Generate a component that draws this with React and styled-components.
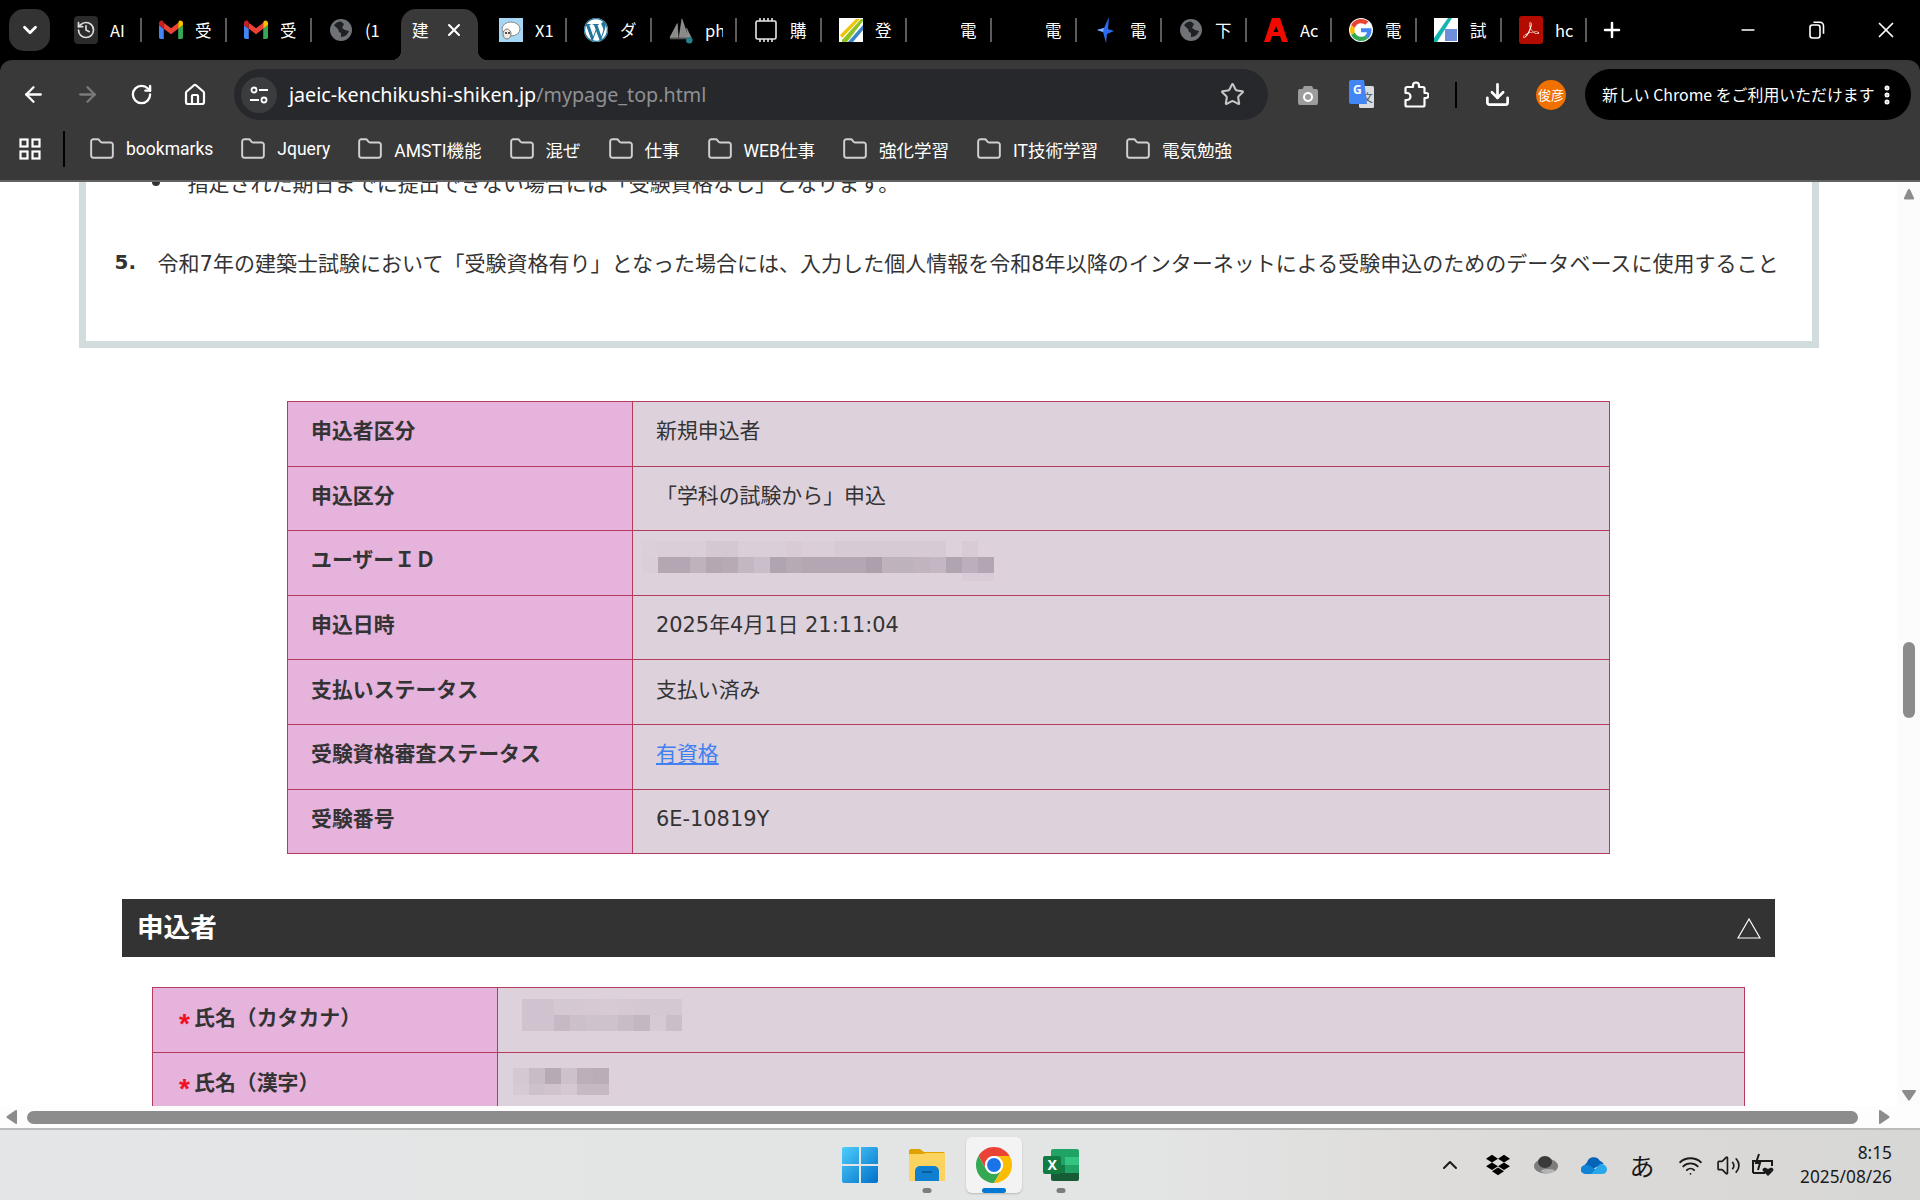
import React from 'react'
import styled, { createGlobalStyle } from 'styled-components'
import {
  ArrowLeft, ArrowRight, RotateCw, Home, Star, Download, MoreVertical,
  ChevronDown, ChevronUp, Folder, Plus, Minus, X, Wifi, Volume2, History,
} from 'lucide-react'
import { SiWordpress, SiDropbox, SiAdobeacrobatreader } from 'react-icons/si'

const JP = '"Noto Sans CJK JP", "Noto Sans", sans-serif'
const UI = '"Noto Sans", "Noto Sans CJK JP", sans-serif'
const PAGE_FONT = '"DejaVu Sans", "Noto Sans CJK JP", sans-serif'

const Global = createGlobalStyle`
  html, body { margin: 0; padding: 0; background: #000; }
  * { box-sizing: border-box; }
`

const Screen = styled.div`
  width: 1920px;
  height: 1200px;
  display: flex;
  flex-direction: column;
  overflow: hidden;
  font-family: ${JP};
`

/* ---- tab strip ---- */
const TabStrip = styled.div`
  height: 60px;
  flex: none;
  display: flex;
  align-items: flex-start;
  padding: 9px 0 0 9px;
  background: #000;
`
const ExpandButton = styled.div`
  width: 41px;
  height: 42px;
  margin-right: 7px;
  border-radius: 15px;
  background: #333;
  color: #fff;
  display: flex;
  align-items: center;
  justify-content: center;
`
const Tab = styled.div`
  position: relative;
  flex: none;
  width: ${p => (p.$active ? '77px' : '85px')};
  height: ${p => (p.$active ? '51px' : '42px')};
  margin: ${p => (p.$active ? '0 4px' : '0')};
  padding: ${p => (p.$active ? '0 0 9px 11px' : '0 0 0 17px')};
  display: flex;
  align-items: center;
  gap: 12px;
  color: #fff;
  background: ${p => (p.$active ? '#393939' : 'transparent')};
  border-radius: ${p => (p.$active ? '15px 15px 0 0' : '0')};
  ${p => p.$sep && `
    &::after {
      content: '';
      position: absolute;
      right: 0;
      top: 9px;
      width: 2px;
      height: 24px;
      background: #5c5c5c;
    }
  `}
  ${p => p.$active && `
    &::before {
      content: '';
      position: absolute;
      left: -10px;
      bottom: 0;
      width: 10px;
      height: 10px;
      background: radial-gradient(circle at 0 0, transparent 10px, #393939 10.5px);
    }
    & > i {
      position: absolute;
      right: -10px;
      bottom: 0;
      width: 10px;
      height: 10px;
      background: radial-gradient(circle at 100% 0, transparent 10px, #393939 10.5px);
    }
  `}
`
const FavSlot = styled.div`
  flex: none;
  width: 24px;
  height: 24px;
  display: flex;
  align-items: center;
  justify-content: center;
`
const TabTitle = styled.span`
  width: 18px;
  overflow: hidden;
  white-space: nowrap;
  font-size: 16.5px;
  line-height: 24px;
  flex: none;
`
const TabClose = styled.div`
  display: flex;
  margin-left: 2px;
`
const NewTab = styled.div`
  width: 40px;
  height: 42px;
  margin-left: 5px;
  color: #fff;
  display: flex;
  align-items: center;
  justify-content: center;
`
const WindowControls = styled.div`
  margin: -9px 0 0 auto;
  display: flex;
`
const WindowButton = styled.div`
  width: 69px;
  height: 60px;
  color: #fff;
  display: flex;
  align-items: center;
  justify-content: center;
`

/* ---- toolbar ---- */
const Toolbar = styled.div`
  height: 60px;
  flex: none;
  display: flex;
  align-items: center;
  padding: 9px 9px 0 6px;
  background: #393939;
  border-radius: 12px 12px 0 0;
`
const ToolButton = styled.div`
  width: 54px;
  height: 51px;
  flex: none;
  display: flex;
  align-items: center;
  justify-content: center;
  color: ${p => p.$color || '#fff'};
`
const AddressBar = styled.div`
  width: 1034px;
  height: 51px;
  margin: 0 13px 0 12px;
  flex: none;
  padding: 0 23px 0 7px;
  border-radius: 26px;
  background: #27282b;
  display: flex;
  align-items: center;
`
const SiteChip = styled.div`
  width: 36px;
  height: 36px;
  border-radius: 50%;
  background: #3b3c3e;
  color: #fff;
  display: flex;
  align-items: center;
  justify-content: center;
`
const Url = styled.div`
  margin-left: 12px;
  font-family: ${UI};
  font-size: 19.7px;
  color: #fff;
  white-space: nowrap;
  & span { color: #8f9194; }
`
const StarSlot = styled.div`
  margin-left: auto;
  color: #c4c7c5;
  display: flex;
`
const BarDivider = styled.div`
  width: 2px;
  flex: none;
  height: ${p => p.$h};
  margin: ${p => p.$m};
  background: #000;
`
const Avatar = styled.div`
  width: 30px;
  height: 30px;
  margin: 0 19px 0 12px;
  flex: none;
  border-radius: 50%;
  background: #f07000;
  color: #fff;
  font-size: 13px;
  display: flex;
  align-items: center;
  justify-content: center;
`
const UpdatePill = styled.div`
  flex: 1;
  height: 51px;
  border-radius: 26px;
  background: #000;
  color: #fff;
  display: flex;
  align-items: center;
  justify-content: space-between;
  padding: 0 12px 0 17px;
  font-size: 15.9px;
  white-space: nowrap;
`

/* ---- bookmarks ---- */
const BookmarksBar = styled.div`
  height: 62px;
  flex: none;
  display: flex;
  align-items: center;
  padding: 0 0 2px 19px;
  background: #393939;
  border-bottom: 2px solid #626262;
`
const Bookmark = styled.div`
  display: flex;
  align-items: center;
  gap: 11px;
  margin-right: 27px;
  color: #fff;
  font-family: Roboto, "Noto Sans CJK JP", sans-serif;
  font-size: 17.5px;
  white-space: nowrap;
  & svg { color: #d0d0d0; }
`

/* ---- page ---- */
const Viewport = styled.div`
  flex: none;
  height: 924px;
  display: flex;
  background: #fff;
  overflow: hidden;
`
const Page = styled.div`
  width: 1897px;
  flex: none;
  color: #333;
  font-family: ${PAGE_FONT};
  font-size: 21.03px;
`
const NoticeCard = styled.div`
  width: 1740px;
  margin: -32px auto 53px;
  border: 7px solid #d2dcdc;
  padding: 7px 0 60px;
`
const BulletRow = styled.div`
  height: 36px;
  margin-left: 66px;
  display: flex;
  align-items: center;
  gap: 28px;
  white-space: nowrap;
  &::before {
    content: '';
    width: 8px;
    height: 8px;
    border-radius: 50%;
    background: #333;
  }
`
const NumberedRow = styled.div`
  height: 36px;
  margin: 44px 0 1px 29px;
  display: flex;
  align-items: center;
  white-space: nowrap;
`
const RowNumber = styled.b`
  width: 43px;
  font-size: 20px;
`
const InfoTable = styled.table`
  width: ${p => p.$w}px;
  margin: 0 auto;
  border-collapse: collapse;
  table-layout: fixed;
  & th, & td {
    height: ${p => p.$rowH}px;
    border: 1px solid #b63a5c;
    padding: 0 0 4px 23px;
    text-align: left;
    vertical-align: middle;
    font-size: 20.9px;
    line-height: 1.3;
  }
  & th { width: ${p => p.$labelW}px; background: #e6b3dd; font-weight: 700; }
  & td { background: #ddd1dc; font-weight: 400; }
`
const FormLabel = styled.th`
  && { padding-left: 26px; }
`
const Required = styled.span`
  display: inline-block;
  width: 15px;
  color: #f01020;
  font-family: "Liberation Sans", sans-serif;
  font-size: 28px;
  font-weight: 700;
  line-height: 0;
  vertical-align: -8px;
`
const StatusLink = styled.a`
  color: #4080f0;
  text-decoration: underline;
`
const SectionBar = styled.div`
  width: 1653px;
  height: 58px;
  margin: 45px auto 30px;
  padding: 0 14px 6px 15px;
  background: #333;
  color: #fff;
  display: flex;
  align-items: center;
  justify-content: space-between;
  font-size: 26.6px;
  font-weight: 700;
  & svg { margin-top: 6px; }
`
const MosaicSvg = styled.svg`
  display: block;
  margin: ${p => p.$m};
`

/* ---- scrollbars ---- */
const VScroll = styled.div`
  width: 23px;
  flex: none;
  padding: 6px 0 5px;
  background: #fcfcfc;
  display: flex;
  flex-direction: column;
  align-items: center;
`
const VThumb = styled.div`
  width: 12px;
  height: 76px;
  margin-top: 442px;
  margin-bottom: auto;
  border-radius: 6px;
  background: #8c8c8c;
`
const HScroll = styled.div`
  height: 22px;
  flex: none;
  padding-left: 6px;
  background: #fdfdfd;
  display: flex;
  align-items: center;
`
const HThumb = styled.div`
  width: 1831px;
  height: 13px;
  margin: 0 21px 0 10px;
  border-radius: 7px;
  background: #8c8c8c;
`

/* ---- taskbar ---- */
const Taskbar = styled.div`
  height: 72px;
  flex: none;
  border-top: 2px solid #bcbcbc;
  background: linear-gradient(90deg, #e4e5e6 0%, #e3e4e4 60%, #dcdad8 80%, #d7d7d6 100%);
  display: grid;
  grid-template-columns: 1fr auto 1fr;
  align-items: center;
`
const AppGroup = styled.div`
  grid-column: 2;
  display: flex;
`
const App = styled.div`
  position: relative;
  width: 67px;
  height: 56px;
  display: flex;
  align-items: center;
  justify-content: center;
`
const ActiveTile = styled.div`
  width: 56px;
  height: 56px;
  border-radius: 6px;
  background: #f3f3f3;
  box-shadow: 0 1px 2px rgba(0, 0, 0, .2);
  display: flex;
  align-items: center;
  justify-content: center;
`
const RunDot = styled.div`
  position: absolute;
  left: 50%;
  bottom: 0;
  transform: translateX(-50%);
  width: ${p => (p.$active ? '24px' : '9px')};
  height: 5px;
  border-radius: 3px;
  background: ${p => (p.$active ? '#0078d4' : '#7d7d7d')};
`
const Tray = styled.div`
  grid-column: 3;
  justify-self: end;
  display: flex;
  align-items: center;
  padding-right: 28px;
`
const TrayItem = styled.div`
  width: ${p => p.$w || 48}px;
  display: flex;
  justify-content: center;
  color: #1a1a1a;
  font-size: 25px;
`
const Clock = styled.div`
  margin-left: 16px;
  text-align: right;
  color: #1a1a1a;
  font-family: ${UI};
  font-size: 17.3px;
  line-height: 24px;
`

/* ---- drawings ---- */
const TriangleUp = ({ size = 12 }) => (
  <svg width={size} height={size} viewBox="0 0 12 12"><path d="M6 1c.7 0 1 .5 1.300 1L11 10c.3.700 0 1.500-1 1.500H2C1 11.500.7 10.700 1 10l3.700-8C5 1.500 5.300 1 6 1z" fill="#8c8c8c" /></svg>
)
const TriangleDown = () => (
  <svg width="14" height="11" viewBox="0 0 14 11"><path d="M1 0h12c1 0 1.300.8.800 1.500L8 10c-.5.700-1.500.7-2 0L.2 1.500C-.3.800 0 0 1 0z" fill="#8c8c8c" /></svg>
)
const TriangleSide = ({ left }) => (
  <svg width="11" height="14" viewBox="0 0 11 14"><path d={left ? 'M11 1v12c0 1-.8 1.300-1.500.8L1 8C.3 7.500.3 6.500 1 6l8.500-5.800C10.200-.3 11 0 11 1z' : 'M0 1v12c0 1 .8 1.300 1.500.8L10 8c.7-.5.7-1.500 0-2L1.500.2C.8-.3 0 0 0 1z'} fill="#8c8c8c" /></svg>
)

const Gmail = () => (
  <svg width="24" height="20" viewBox="2 4 20 16">
    <path d="M3.400 19.500H6V11l-4-3v10.100c0 .8.600 1.400 1.400 1.400z" fill="#4285f4" />
    <path d="M18 19.500h2.600c.8 0 1.400-.6 1.400-1.400V8l-4 3z" fill="#34a853" />
    <path d="M6 11V6l6 4.500L18 6v5l-6 4.500z" fill="#ea4335" />
    <path d="M18 6v5l4-3V6.200c0-1.800-2-2.800-3.400-1.700z" fill="#fbbc04" />
    <path d="M2 8l4 3V6l-.6-1.500C4 3.400 2 4.400 2 6.200z" fill="#c5221f" />
  </svg>
)
const Globe = () => (
  <svg width="24" height="24" viewBox="0 0 24 24">
    <circle cx="12" cy="12" r="11" fill="#6f7276" />
    <path d="M12 3.500c-3 0-5.500 1.500-7 3.800L9 11l1 3 2 1v4c4 0 7-3 8-6l-4-1-3-2 2-4c-1-1-2-1.500-3-2.500z" fill="#1f2023" />
  </svg>
)
const Sheep = () => (
  <svg width="24" height="24" viewBox="0 0 24 24">
    <rect width="24" height="24" fill="#a6d8f5" />
    <ellipse cx="12" cy="11" rx="9" ry="7" fill="#fff" stroke="#888" />
    <ellipse cx="8" cy="16" rx="4" ry="5" fill="#f3e8e0" stroke="#777" />
    <circle cx="7" cy="15" r="1" fill="#222" /><circle cx="10" cy="15" r="1" fill="#222" />
  </svg>
)
const Wp = () => (
  <svg width="24" height="24" viewBox="0 0 24 24"><circle cx="12" cy="12" r="12" fill="#fff" /><SiWordpress x="0" y="0" size="24" color="#21759b" /></svg>
)
const Sail = () => (
  <svg width="26" height="28" viewBox="0 0 26 28">
    <path d="M1 22L9 7l1 15zM11 22l3-20 7 20zM21 22l-2-10 5 10z" fill="#8a8a8a" stroke="#bbb" strokeWidth=".5" />
    <path d="M1 23h22v1H1z" fill="#777" />
    <circle cx="22" cy="25" r="3.500" fill="#26808e" />
  </svg>
)
const Chip = () => (
  <svg width="24" height="26" viewBox="0 0 24 26" fill="none" stroke="#e8e8e8" strokeWidth="1.600">
    <rect x="2" y="4" width="20" height="18" rx="1.500" />
    <path d="M6 1v3M10 1v3M14 1v3M18 1v3M6 22v3M10 22v3M14 22v3M18 22v3" />
  </svg>
)
const Survey = () => (
  <svg width="24" height="24" viewBox="0 0 24 24">
    <rect width="24" height="24" fill="#fff" />
    <path d="M3 22L22 1h2v2L8 24H3z" fill="#8fc31f" />
    <path d="M1 17L17 1h4L3 20z" fill="#f0c400" />
    <path d="M9 24L24 7v5L14 24z" fill="#3a86c8" />
  </svg>
)
const Bolt = () => (
  <svg width="20" height="26" viewBox="0 0 20 26"><path d="M13 0L8 11 1 13l6 2 3 11 1-9 7-3-6-2z" fill="#2a6cf0" /><path d="M8 11l-7 2 6 2z" fill="#7fb2ff" /></svg>
)
const AdobeMark = () => (
  <svg width="24" height="26" viewBox="0 0 24 26"><path fillRule="evenodd" d="M8 1h8l8 24h-6l-2-6H8l-2 6H0zM12 9l-2.500 6h5z" fill="#f00a00" /></svg>
)
const GoogleG = () => (
  <svg width="24" height="24" viewBox="0 0 48 48">
    <circle cx="24" cy="24" r="24" fill="#fff" />
    <path fill="#4285f4" d="M45 24.500c0-1.600-.1-2.800-.4-4H24v7.900h12c-.3 2-1.600 5-4.600 7l7 5.400c4.200-3.900 6.600-9.600 6.600-16.300z" />
    <path fill="#34a853" d="M24 46c5.900 0 10.900-2 14.500-5.300l-7-5.400c-1.900 1.300-4.400 2.200-7.500 2.200-5.800 0-10.700-3.800-12.400-9.100l-7.200 5.600C8 41.200 15.400 46 24 46z" />
    <path fill="#fbbc05" d="M11.600 28.400c-.5-1.300-.7-2.800-.7-4.400s.3-3 .7-4.400l-7.200-5.600C2.900 17 2 20.400 2 24s.9 7 2.400 10z" />
    <path fill="#ea4335" d="M24 10.500c4.100 0 6.900 1.800 8.500 3.200l6.200-6.100C34.900 4.100 29.900 2 24 2 15.400 2 8 6.800 4.400 14l7.200 5.600c1.700-5.300 6.600-9.100 12.400-9.100z" />
  </svg>
)
const Exam = () => (
  <svg width="24" height="24" viewBox="0 0 24 24">
    <rect width="24" height="24" fill="#fff" />
    <path d="M0 20L14 0h4L3 24H0z" fill="#13b5b1" />
    <rect x="11" y="11" width="12" height="12" fill="#6f8fdc" />
  </svg>
)
const Pdf = () => (
  <svg width="24" height="28" viewBox="0 0 24 28"><rect width="24" height="28" rx="3" fill="#b30b00" /><SiAdobeacrobatreader x="4" y="6" size="16" color="#fff" /></svg>
)
const ClockFav = () => (
  <svg width="24" height="28" viewBox="0 0 24 28"><rect width="24" height="28" rx="4" fill="#2b2b2b" /><History x="2" y="4" size="20" color="#ddd" /></svg>
)
const Restore = () => (
  <svg width="16" height="18" viewBox="0 0 16 18" fill="none" stroke="#fff" strokeWidth="1.600"><rect x="1" y="4" width="10" height="13" rx="2.500" /><path d="M4.500 1.200h6.500a3.500 3.500 0 0 1 3.500 3.500v8" /></svg>
)
const Tune = () => (
  <svg width="20" height="20" viewBox="0 0 20 20" fill="none" stroke="#fff" strokeWidth="1.800"><circle cx="5" cy="5" r="2.500" /><path d="M10 5h9M1 15h9" /><circle cx="15" cy="15" r="2.500" /></svg>
)
const Camera = () => (
  <svg width="24" height="24" viewBox="0 0 24 24"><path d="M8 3h8l1.500 3H20a2 2 0 0 1 2 2v12a2 2 0 0 1-2 2H4a2 2 0 0 1-2-2V8a2 2 0 0 1 2-2h2.500z" fill="#9c9c9c" /><circle cx="12" cy="14" r="5" fill="#fff" /><circle cx="12" cy="14" r="3" fill="#9c9c9c" /></svg>
)
const Translate = () => (
  <svg width="26" height="32" viewBox="0 0 26 32">
    <rect x="10" y="7" width="15" height="22" rx="1.500" fill="#dadce0" />
    <text x="13" y="23" fontSize="11" fill="#555" fontFamily={JP}>文</text>
    <path d="M2 1h13l3 24H2a2 2 0 0 1-2-2V3a2 2 0 0 1 2-2z" fill="#4285f4" />
    <text x="4" y="15" fontSize="12" fontWeight="700" fill="#fff" fontFamily={UI}>G</text>
  </svg>
)
const PuzzlePiece = () => (
  <svg width="26" height="28" viewBox="0 0 26 28" fill="none" stroke="#fff" strokeWidth="2.200" strokeLinejoin="round">
    <path d="M4 6h6V4.500a3 3 0 0 1 6 0V6h4a1.500 1.500 0 0 1 1.500 1.500V12H23a2.500 2.500 0 0 1 0 5h-1.500v7a1.500 1.500 0 0 1-1.500 1.500H4A1.500 1.500 0 0 1 2.500 24v-5H4a3.500 3.500 0 0 0 0-7H2.500V7.500A1.500 1.500 0 0 1 4 6z" />
  </svg>
)
const AppsGrid = () => (
  <svg width="22" height="22" viewBox="0 0 22 22" fill="none" stroke="#fff" strokeWidth="2.200"><rect x="1.500" y="1.500" width="7" height="7" /><rect x="13.500" y="1.500" width="7" height="7" /><rect x="1.500" y="13.500" width="7" height="7" /><rect x="13.500" y="13.500" width="7" height="7" /></svg>
)
const HollowTriangle = () => (
  <svg width="24" height="21" viewBox="0 0 24 21" fill="none" stroke="#fff" strokeWidth="1.200"><path d="M12 1L1 20h22z" /></svg>
)
const StartLogo = () => (
  <svg width="36" height="36" viewBox="0 0 36 36">
    <defs><linearGradient id="win" x1="0" y1="0" x2="1" y2="1"><stop offset="0" stopColor="#4fcdfb" /><stop offset="1" stopColor="#0070c9" /></linearGradient></defs>
    <path d="M2 0h15v17H0V2a2 2 0 0 1 2-2zM19 0h15a2 2 0 0 1 2 2v15H19zM0 19h17v17H2a2 2 0 0 1-2-2zM19 19h17v15a2 2 0 0 1-2 2H19z" fill="url(#win)" />
  </svg>
)
const Explorer = () => (
  <svg width="36" height="32" viewBox="0 0 36 32">
    <path d="M0 2a2 2 0 0 1 2-2h9l4 3h19a2 2 0 0 1 2 2v4H0z" fill="#dfa200" />
    <path d="M0 5h14l3-1h19v28H0z" fill="#fdd35f" />
    <path d="M6 22a5 5 0 0 1 5-5h14a5 5 0 0 1 5 5v10H6z" fill="#0f7fd2" />
    <path d="M13 23h10" stroke="#0a4f8a" strokeWidth="1.500" />
  </svg>
)
const ChromeLogo = () => (
  <svg width="36" height="36" viewBox="2 2 44 44">
    <path fill="#ea4335" d="M43.050 13A22 22 0 0 0 4.950 13L14.470 29.500A11 11 0 0 1 24 13Z" />
    <path fill="#34a853" d="M4.950 13A22 22 0 0 0 24 46L33.530 29.500A11 11 0 0 1 14.470 29.500Z" />
    <path fill="#fbbc04" d="M24 46A22 22 0 0 0 43.050 13L24 13A11 11 0 0 1 33.530 29.500Z" />
    <circle cx="24" cy="24" r="11" fill="#fff" />
    <circle cx="24" cy="24" r="8.500" fill="#1a73e8" />
  </svg>
)
const Excel = () => (
  <svg width="36" height="32" viewBox="0 0 36 32">
    <path d="M10 0h24a2 2 0 0 1 2 2v6H8V2a2 2 0 0 1 2-2z" fill="#21a366" />
    <rect x="8" y="8" width="14" height="8" fill="#21a366" /><rect x="22" y="8" width="14" height="8" fill="#33c481" />
    <rect x="8" y="16" width="14" height="8" fill="#107c41" /><rect x="22" y="16" width="14" height="8" fill="#21a366" />
    <path d="M8 24h28v6a2 2 0 0 1-2 2H10a2 2 0 0 1-2-2z" fill="#185c37" />
    <rect y="7" width="18" height="18" rx="2" fill="#107c41" />
    <text x="4.500" y="21" fontSize="14" fontWeight="700" fill="#fff" fontFamily={UI}>X</text>
  </svg>
)
const Disc = () => (
  <svg width="24" height="20" viewBox="0 0 24 20"><ellipse cx="12" cy="11" rx="12" ry="7.500" fill="#7d7d7d" /><ellipse cx="11" cy="7" rx="7" ry="6" fill="#3a3a3a" /><ellipse cx="14" cy="16" rx="7" ry="2" fill="#b5b5b5" /></svg>
)
const OneDrive = () => (
  <svg width="26" height="18" viewBox="0 0 26 18"><path d="M6 6.500A7 7 0 0 1 19 5c2 .5 3 1.500 3.500 3L9 14 3.500 9z" fill="#0364b8" /><path d="M4.500 18A4.500 4.500 0 0 1 4 9c2-.5 4 0 5 1l7 4-5 4z" fill="#0f84d4" /><path d="M10 18l9-10c4-.5 7 2 7 5.500 0 2.500-2 4.500-4.500 4.500z" fill="#28a8ea" /></svg>
)
const BatteryCare = () => (
  <svg width="26" height="24" viewBox="0 0 26 24" fill="none" stroke="#1a1a1a" strokeWidth="2"><path d="M3 20V8h19v5M3 20h12" /><path d="M9 1L6 10h4l-2 7" /><path d="M18 23l-5-5c-1.500-2 1-4 3-3l2 1 2-1c2-1 4.500 1 3 3z" fill="#1a1a1a" stroke="none" /></svg>
)

const Mosaic = ({ rows, cell = 16, rowH, margin }) => {
  const heights = rowH || rows.map(() => cell)
  const width = rows[0].length * cell
  const height = heights.reduce((a, b) => a + b, 0)
  let y = 0
  return (
    <MosaicSvg width={width} height={height} $m={margin}>
      {rows.map((row, r) => {
        const top = y
        y += heights[r]
        return row.map((a, c) => a > 0 && (
          <rect key={`${r}-${c}`} x={c * cell} y={top} width={cell} height={heights[r]} fill="#5e4f5e" fillOpacity={a} />
        ))
      })}
    </MosaicSvg>
  )
}

const tabs = [
  { icon: <ClockFav />, title: 'AI', sep: true },
  { icon: <Gmail />, title: '受', sep: true },
  { icon: <Gmail />, title: '受', sep: true },
  { icon: <Globe />, title: '(1', sep: false },
  { active: true, title: '建' },
  { icon: <Sheep />, title: 'X1', sep: true },
  { icon: <Wp />, title: 'ダ', sep: true },
  { icon: <Sail />, title: 'ph', sep: true },
  { icon: <Chip />, title: '購', sep: true },
  { icon: <Survey />, title: '登', sep: true },
  { title: '電', sep: true },
  { title: '電', sep: true },
  { icon: <Bolt />, title: '電', sep: true },
  { icon: <Globe />, title: '下', sep: true },
  { icon: <AdobeMark />, title: 'Ac', sep: true },
  { icon: <GoogleG />, title: '電', sep: true },
  { icon: <Exam />, title: '試', sep: true },
  { icon: <Pdf />, title: 'hc', sep: true },
]

const bookmarks = ['bookmarks', 'Jquery', 'AMSTI機能', '混ぜ', '仕事', 'WEB仕事', '強化学習', 'IT技術学習', '電気勉強']

const statusRows = [
  ['申込者区分', '新規申込者'],
  ['申込区分', '「学科の試験から」申込'],
  ['ユーザーＩＤ', 'id'],
  ['申込日時', '2025年4月1日 21:11:04'],
  ['支払いステータス', '支払い済み'],
  ['受験資格審査ステータス', 'link'],
  ['受験番号', '6E-10819Y'],
]

const idMosaic = [
  [.01, .02, .02, .02, .07, .07, .02, .02, .02, .04, .02, .02, .05, .05, .05, .05, .05, .05, .05, 0, .04, 0],
  [.02, .32, .32, .24, .32, .3, .2, .14, .34, .3, .32, .32, .32, .32, .38, .24, .24, .22, .2, .34, .26, .33],
  [0, 0, 0, 0, 0, 0, 0, 0, 0, 0, 0, 0, 0, 0, 0, 0, 0, 0, 0, 0, .03, .03],
]
const kanaMosaic = [
  [.1, .1, .07, .07, .06, .05, .06, .07, .07, .07],
  [.1, .1, .18, .13, .11, .11, .16, .2, .05, .14],
]
const kanjiMosaic = [
  [.07, .16, .3, .12, .26, .28],
  [.05, .12, .1, .07, .18, .18],
]

const App_ = () => (
  <Screen>
    <Global />
    <TabStrip>
      <ExpandButton><ChevronDown size={22} strokeWidth={3} /></ExpandButton>
      {tabs.map((t, i) => t.active ? (
        <Tab key={i} $active>
          <TabTitle>{t.title}</TabTitle>
          <TabClose><X size={20} strokeWidth={2.500} /></TabClose>
          <i />
        </Tab>
      ) : (
        <Tab key={i} $sep={t.sep}>
          <FavSlot>{t.icon}</FavSlot>
          <TabTitle>{t.title}</TabTitle>
        </Tab>
      ))}
      <NewTab><Plus size={24} strokeWidth={2.500} /></NewTab>
      <WindowControls>
        <WindowButton><Minus size={20} /></WindowButton>
        <WindowButton><Restore /></WindowButton>
        <WindowButton><X size={26} strokeWidth={1.600} /></WindowButton>
      </WindowControls>
    </TabStrip>

    <Toolbar>
      <ToolButton><ArrowLeft size={25} strokeWidth={2.200} /></ToolButton>
      <ToolButton $color="#7a7a7a"><ArrowRight size={25} strokeWidth={2.200} /></ToolButton>
      <ToolButton><RotateCw size={23} strokeWidth={2.400} /></ToolButton>
      <ToolButton><Home size={24} strokeWidth={2.200} /></ToolButton>
      <AddressBar>
        <SiteChip><Tune /></SiteChip>
        <Url>jaeic-kenchikushi-shiken.jp<span>/mypage_top.html</span></Url>
        <StarSlot><Star size={25} strokeWidth={2} /></StarSlot>
      </AddressBar>
      <ToolButton><Camera /></ToolButton>
      <ToolButton><Translate /></ToolButton>
      <ToolButton><PuzzlePiece /></ToolButton>
      <BarDivider $h="26px" $m="0 13px 0 12px" />
      <ToolButton><Download size={27} strokeWidth={2.400} /></ToolButton>
      <Avatar>俊彦</Avatar>
      <UpdatePill>
        新しい Chrome をご利用いただけます
        <MoreVertical size={24} strokeWidth={3} />
      </UpdatePill>
    </Toolbar>

    <BookmarksBar>
      <AppsGrid />
      <BarDivider $h="36px" $m="0 24px 0 22px" />
      {bookmarks.map(b => (
        <Bookmark key={b}><Folder size={26} strokeWidth={1.800} />{b}</Bookmark>
      ))}
    </BookmarksBar>

    <Viewport>
      <Page>
        <NoticeCard>
          <BulletRow>指定された期日までに提出できない場合には「受験資格なし」となります。</BulletRow>
          <NumberedRow>
            <RowNumber>5.</RowNumber>
            令和7年の建築士試験において「受験資格有り」となった場合には、入力した個人情報を令和8年以降のインターネットによる受験申込のためのデータベースに使用すること
          </NumberedRow>
        </NoticeCard>

        <InfoTable $w={1323} $labelW={345} $rowH={64.6}>
          <tbody>
            {statusRows.map(([label, value]) => (
              <tr key={label}>
                <th>{label}</th>
                <td>
                  {value === 'id' && <Mosaic rows={idMosaic} margin="0 0 0 -14px" rowH={[16, 16, 8]} />}
                  {value === 'link' && <StatusLink href="#">有資格</StatusLink>}
                  {value !== 'id' && value !== 'link' && value}
                </td>
              </tr>
            ))}
          </tbody>
        </InfoTable>

        <SectionBar>申込者<HollowTriangle /></SectionBar>

        <InfoTable $w={1593} $labelW={345} $rowH={65}>
          <tbody>
            <tr>
              <FormLabel><Required>*</Required>氏名（カタカナ）</FormLabel>
              <td><Mosaic rows={kanaMosaic} margin="0 0 6px 1px" /></td>
            </tr>
            <tr>
              <FormLabel><Required>*</Required>氏名（漢字）</FormLabel>
              <td><Mosaic rows={kanjiMosaic} rowH={[16, 11]} margin="0 0 4px -8px" /></td>
            </tr>
          </tbody>
        </InfoTable>
      </Page>
      <VScroll>
        <TriangleUp />
        <VThumb />
        <TriangleDown />
      </VScroll>
    </Viewport>

    <HScroll>
      <TriangleSide left />
      <HThumb />
      <TriangleSide />
    </HScroll>

    <Taskbar>
      <AppGroup>
        <App><StartLogo /></App>
        <App><Explorer /><RunDot /></App>
        <App><ActiveTile><ChromeLogo /></ActiveTile><RunDot $active /></App>
        <App><Excel /><RunDot /></App>
      </AppGroup>
      <Tray>
        <TrayItem><ChevronUp size={24} strokeWidth={2} /></TrayItem>
        <TrayItem><SiDropbox size={24} color="#000" /></TrayItem>
        <TrayItem><Disc /></TrayItem>
        <TrayItem><OneDrive /></TrayItem>
        <TrayItem>あ</TrayItem>
        <TrayItem><Wifi size={25} strokeWidth={1.800} /></TrayItem>
        <TrayItem $w={28}><Volume2 size={25} strokeWidth={1.600} /></TrayItem>
        <TrayItem $w={42}><BatteryCare /></TrayItem>
        <Clock>
          <div>8:15</div>
          <div>2025/08/26</div>
        </Clock>
      </Tray>
    </Taskbar>
  </Screen>
)

export default App_
